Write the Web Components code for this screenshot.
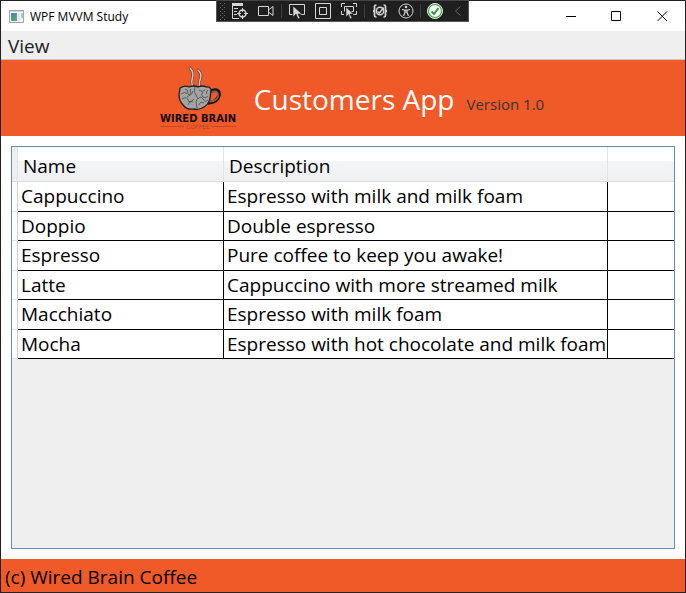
<!DOCTYPE html>
<html lang="en">
<head>
<meta charset="utf-8">
<title>WPF MVVM Study</title>
<style>
html, body { height: 100%; margin: 0; }
body { font-family: "Open Sans", "Noto Sans", sans-serif; font-size: 19px; color: #000; }
</style>
</head>
<body>
<app-window>
  <title-bar slot="title">WPF MVVM Study</title-bar>
  <debug-toolbar slot="overlay"></debug-toolbar>
  <menu-bar slot="menu">View</menu-bar>
  <app-header slot="header">Customers App<span slot="version">Version 1.0</span></app-header>
  <customer-grid></customer-grid>
  <app-footer slot="footer">(c) Wired Brain Coffee</app-footer>
</app-window>
<script>
const define = (name, html, setup) => customElements.define(name, class extends HTMLElement {
  constructor() {
    super();
    const t = document.createElement('template');
    t.innerHTML = html;
    this.attachShadow({ mode: 'open' }).append(t.content.cloneNode(true));
    if (setup) setup(this.shadowRoot);
  }
});

define('app-window', `
<style>
:host { display: flex; flex-direction: column; box-sizing: border-box; min-height: 100%; border: 1px solid #202124; background: #fff; position: relative; }
main { flex: 1; display: flex; padding: 10px; }
::slotted(customer-grid) { flex: 1; }
</style>
<slot name="title"></slot><slot name="overlay"></slot><slot name="menu"></slot><slot name="header"></slot>
<main><slot></slot></main>
<slot name="footer"></slot>`);

define('title-bar', `
<style>
:host { display: flex; align-items: center; height: 30px; background: #fff; font-size: 12px; }
.icon { margin: 0 6px 0 8px; }
span { flex: 1; }
button { width: 46px; height: 30px; padding: 0; border: 0; background: none; display: grid; place-items: center; }
button:hover { background: #e5e5e5; }
</style>
<svg class="icon" width="15" height="13" viewBox="0 0 15 13"><defs><linearGradient id="g" x2=".6" y2="1"><stop stop-color="#4c7fb8"/><stop offset="1" stop-color="#56b06c"/></linearGradient></defs><rect x=".5" y=".5" width="14" height="12" fill="#f4f4f4" stroke="#a3a6a8"/><path d="M1 1.5h13" stroke="#d5d8da"/><path d="M2 3h6v8H2z" fill="url(#g)"/><path d="M9 3h2v8H9z" fill="#dfe5e8"/><path d="M12 3h2v5h-2z" fill="#a9c6dd"/></svg>
<span><slot></slot></span>
<button aria-label="Minimize"><svg width="11" height="11"><path d="M1 5.5h10" stroke="#000"/></svg></button>
<button aria-label="Maximize"><svg width="11" height="11"><path d="M.5.5h9v9h-9z" fill="none" stroke="#000"/></svg></button>
<button aria-label="Close"><svg width="11" height="11"><path d="M.5.5l9.500 9.500M10 .5L.5 10" stroke="#000"/></svg></button>`);

define('debug-toolbar', `
<style>
:host { position: absolute; top: -1px; left: 215px; display: flex; align-items: center; box-sizing: border-box; width: 253px; height: 22px; border: 1px solid #555; border-top-color: #444; background: #1f1f1f; }
button { flex: none; width: 26px; height: 20px; padding: 0; border: 0; background: none; display: grid; place-items: center; }
i { width: 1px; height: 14px; margin: 0 2px; background: #3d3d3d; flex: none; }
i:last-of-type { margin: 0 1px; }
svg { fill: none; stroke: #d6d6d6; display: block; }
.grip { flex: none; margin-left: 3px; }
button:last-child { width: 20px; }
</style>
<svg class="grip" width="7" height="18"><path d="M.5 1v17M4.500 1v17" stroke="#666" stroke-dasharray="1 3"/><path d="M2.500 3v15" stroke="#666" stroke-dasharray="1 3"/></svg>
<button aria-label="Live visual tree"><svg width="18" height="18" viewBox="0 0 18 18"><path d="M1 2.500h11" stroke-width="3"/><path d="M1.500 1v15.500H8M3 6.500h4M3 9.500h3M3 12.500h3"/><circle cx="11.500" cy="11.500" r="3.500" stroke-width="1.500"/><path d="M11.500 6v4M11.500 13v4M6 11.500h4M13 11.500h4"/></svg></button>
<button aria-label="Record"><svg width="17" height="12" viewBox="0 0 17 12"><path d="M.5 1.500h10v9H.5zM10.500 5l4.500-3.500v9L10.500 7"/></svg></button>
<i></i>
<button aria-label="Select element"><svg width="18" height="18" viewBox="0 0 18 18"><path d="M4.500 12.500h-3V2.500h15v10h-4"/><path d="M5 4v11l3-3 2 5 2-1-2-4h4z" fill="#d6d6d6" stroke="#1f1f1f" stroke-width=".6"/></svg></button>
<button aria-label="Display layout adorners"><svg width="16" height="16"><path d="M.5.5h15v15H.5zM4.500 4.500h7v7h-7z"/></svg></button>
<button aria-label="Track focused element"><svg width="18" height="18" viewBox="0 0 18 18"><path d="M1.500 5V1.500H5M13 1.500h3.500V5M1.500 9v3.500H4M16.500 9v3.500H13M4.500 9.500v-5h9v5h-2"/><path d="M6 5v10l2.500-2.500L10 17l2-1-2-4h3.500z" fill="#d6d6d6" stroke="#1f1f1f" stroke-width=".6"/></svg></button>
<i></i>
<button aria-label="Binding failures"><svg width="16" height="14" viewBox="0 0 16 14"><path d="M4.500 1Q2 1 2.500 4T1 7q2 0 1.500 3t2 3M11.500 1q2.500 0 2 3t1.500 3q-2 0-1.500 3t-2 3" stroke-width="1.700"/><circle cx="8" cy="7" r="3.700" stroke-width="1.500"/><path d="M5.500 7.500l2 1.500 4-5.500" stroke-width="1.500"/></svg></button>
<button aria-label="Accessibility"><svg width="16" height="16" viewBox="0 0 16 16"><circle cx="8" cy="8" r="7"/><circle cx="8" cy="4" r="1.300" fill="#d6d6d6" stroke="none"/><path d="M4 6.500l3 .7v2.300L5.500 13M12 6.500l-3 .7v2.300l1.500 3.500M7 7h2v2H7z" stroke-width="1.200"/></svg></button>
<i></i>
<button aria-label="Hot reload"><svg width="18" height="18" viewBox="0 0 18 18"><circle cx="9" cy="9" r="7.500" fill="#fff" stroke="#dff1df"/><circle cx="9" cy="9" r="6.500" stroke="#43a047" stroke-width="1.200"/><path d="M5.500 9.500l2.500 2.500 4.500-6" stroke="#2e9b3c" stroke-width="2"/></svg></button>
<button aria-label="Collapse"><svg width="8" height="12"><path d="M6.500 1.500L1.500 6l5 4.500" stroke="#666"/></svg></button>`);

define('menu-bar', `
<style>
:host { display: flex; height: 28px; background: #efefef; border-bottom: 1px solid #c6c6c6; }
button { border: 0; padding: 3px 7px 0; background: none; color: #212121; font: inherit; line-height: 25px; }
button:hover { background: #d9e8f5; }
</style>
<button><slot></slot></button>`);

define('app-header', `
<style>
:host { display: flex; justify-content: center; align-items: center; height: 76px; padding-left: 16px; background: #f05a28; }
svg { width: 80px; height: 66px; margin: 0 16px 0 0; overflow: visible; }
h1 { margin: 2px 12px 0 0; font-size: 28px; line-height: 38px; font-weight: 400; color: #fff; }
p { margin: 12px 0 0; font-size: 15px; line-height: 20px; color: #363636; }
text { text-anchor: middle; }
</style>
<svg viewBox="0 0 80 66" role="img" aria-label="Wired Brain Coffee">
<g fill="none" stroke-linecap="round"><path d="M32 3q4 4 2.500 9t0 10M40 5q4 4 2.500 8t-1 8" stroke="#54362c" stroke-width="2.600"/><path d="M32 3q4 4 2.500 9t0 10M40 5q4 4 2.500 8t-1 8" stroke="#ccc" stroke-width="1.500"/>
<path d="M53 26q9-3 8 4t-11 8" stroke="#171717" stroke-width="3.600"/><path d="M54 27q6-2 6 3.500t-8 6" stroke="#a15b48" stroke-width="1.800"/></g>
<path d="M22 23q5-3 9-1 5-2 9 0 5-2 8 0 4-1 5 3l-1 8q-1 7-8 10-4 2-8 1-7 1-10-3-5-5-5-11z" fill="#a4a4a4" stroke="#202020" stroke-width="1.300"/>
<path d="M37 22q-2 5 1 8t0 7l1 6M23 29q4-3 7 0t5-3M27 24q3 0 3 4M24 34q5-3 6 1t6-1M30 40q1-4 5-3M33 24q-2 2 0 4M41 25q3 3 6 0M45 27q-3 3 0 5t5-1M40 34q3-4 5 0t5 1M41 40q1-4 5-2M29 32q3-1 4-4M50 25q-3 2-1 4" fill="none" stroke="#484848" stroke-width=".8"/>
<text x="40" y="57" font-family="DejaVu Sans" font-size="10" font-weight="700" fill="#160b08">WIRED BRAIN</text>
<path d="M2 61.500h24M54 61.500h24" stroke="#c04a28"/>
<text x="40" y="64" font-family="DejaVu Sans" font-size="6" fill="#b3482a">COFFEE</text>
</svg>
<h1><slot></slot></h1>
<p><slot name="version"></slot></p>`);

define('customer-grid', `
<style>
:host { display: block; box-sizing: border-box; border: 1px solid #688caf; background: #efefef; }
table { width: 100%; height: 212px; table-layout: fixed; border-collapse: separate; border-spacing: 0; }
.handle { width: 6px; } .name { width: 206px; } .desc { width: 384px; }
th, td { box-sizing: border-box; padding: 1px 3px 0; text-align: left; font-weight: 400; line-height: 27px; white-space: nowrap; }
thead th { height: 35px; padding: 4px 5px 0; background: linear-gradient(#fff 40%, #f4f5f7 41%, #eff0f2); border-right: 1px solid #e2e3e5; border-bottom: 1px solid #dcdddf; }
thead th:last-child { border-right: 0; }
thead th:first-child, tbody th { padding: 0; }
thead th:first-child { background: #efefef; }
tbody th { background: #fff; border-right: 1px solid #cfcfcf; border-bottom: 1px solid #e3e3e3; }
td { height: 29px; background: #fff; border-right: 1px solid #000; border-bottom: 1px solid #000; }
td:last-child { border-right: 0; }
</style>
<table>
<colgroup><col class="handle"><col class="name"><col class="desc"><col></colgroup>
<thead><tr><th></th><th scope="col">Name</th><th scope="col">Description</th><th></th></tr></thead>
<tbody></tbody>
</table>`, root => {
  const body = root.querySelector('tbody');
  [['Cappuccino', 'Espresso with milk and milk foam'],
   ['Doppio', 'Double espresso'],
   ['Espresso', 'Pure coffee to keep you awake!'],
   ['Latte', 'Cappuccino with more streamed milk'],
   ['Macchiato', 'Espresso with milk foam'],
   ['Mocha', 'Espresso with hot chocolate and milk foam']].forEach(([name, description]) => {
    const row = body.insertRow();
    row.append(document.createElement('th'));
    for (const text of [name, description, '']) row.insertCell().textContent = text;
  });
});

define('app-footer', `
<style>
:host { display: block; box-sizing: border-box; height: 33px; padding: 4px 4px 0; line-height: 28px; background: #f05a28; }
</style>
<slot></slot>`);
</script>
</body>
</html>
